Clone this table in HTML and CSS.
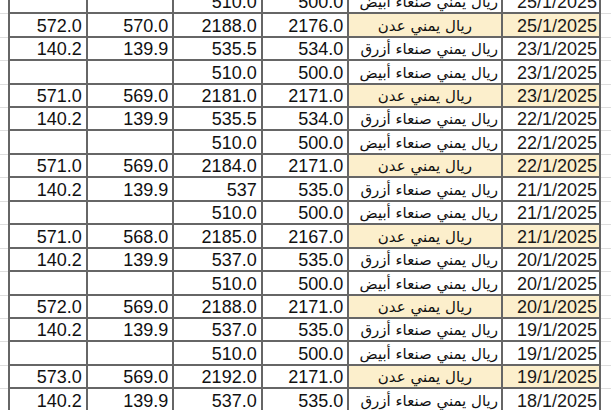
FILE: index.html
```html
<!DOCTYPE html>
<html lang="ar">
<head>
<meta charset="utf-8">
<title>أسعار الصرف</title>
<link rel="stylesheet" href="styles.css">
</head>
<body>
<div class="sheet">
  <div class="row"><div class="g gl"></div><div class="c c1"></div><div class="c c2"></div><div class="c c3">510.0</div><div class="c c4">500.0</div><div class="c nm">ريال يمني صنعاء أبيض</div><div class="c dt">25/1/2025</div><div class="g gr"></div></div>
  <div class="row"><div class="g gl"></div><div class="c c1">572.0</div><div class="c c2">570.0</div><div class="c c3">2188.0</div><div class="c c4">2176.0</div><div class="c nm hl aden">ريال يمني عدن</div><div class="c dt hl">25/1/2025</div><div class="g gr"></div></div>
  <div class="row"><div class="g gl"></div><div class="c c1">140.2</div><div class="c c2">139.9</div><div class="c c3">535.5</div><div class="c c4">534.0</div><div class="c nm">ريال يمني صنعاء أزرق</div><div class="c dt">23/1/2025</div><div class="g gr"></div></div>
  <div class="row"><div class="g gl"></div><div class="c c1"></div><div class="c c2"></div><div class="c c3">510.0</div><div class="c c4">500.0</div><div class="c nm">ريال يمني صنعاء أبيض</div><div class="c dt">23/1/2025</div><div class="g gr"></div></div>
  <div class="row"><div class="g gl"></div><div class="c c1">571.0</div><div class="c c2">569.0</div><div class="c c3">2181.0</div><div class="c c4">2171.0</div><div class="c nm hl aden">ريال يمني عدن</div><div class="c dt hl">23/1/2025</div><div class="g gr"></div></div>
  <div class="row"><div class="g gl"></div><div class="c c1">140.2</div><div class="c c2">139.9</div><div class="c c3">535.5</div><div class="c c4">534.0</div><div class="c nm">ريال يمني صنعاء أزرق</div><div class="c dt">22/1/2025</div><div class="g gr"></div></div>
  <div class="row"><div class="g gl"></div><div class="c c1"></div><div class="c c2"></div><div class="c c3">510.0</div><div class="c c4">500.0</div><div class="c nm">ريال يمني صنعاء أبيض</div><div class="c dt">22/1/2025</div><div class="g gr"></div></div>
  <div class="row"><div class="g gl"></div><div class="c c1">571.0</div><div class="c c2">569.0</div><div class="c c3">2184.0</div><div class="c c4">2171.0</div><div class="c nm hl aden">ريال يمني عدن</div><div class="c dt hl">22/1/2025</div><div class="g gr"></div></div>
  <div class="row"><div class="g gl"></div><div class="c c1">140.2</div><div class="c c2">139.9</div><div class="c c3">537</div><div class="c c4">535.0</div><div class="c nm">ريال يمني صنعاء أزرق</div><div class="c dt">21/1/2025</div><div class="g gr"></div></div>
  <div class="row"><div class="g gl"></div><div class="c c1"></div><div class="c c2"></div><div class="c c3">510.0</div><div class="c c4">500.0</div><div class="c nm">ريال يمني صنعاء أبيض</div><div class="c dt">21/1/2025</div><div class="g gr"></div></div>
  <div class="row"><div class="g gl"></div><div class="c c1">571.0</div><div class="c c2">568.0</div><div class="c c3">2185.0</div><div class="c c4">2167.0</div><div class="c nm hl aden">ريال يمني عدن</div><div class="c dt hl">21/1/2025</div><div class="g gr"></div></div>
  <div class="row"><div class="g gl"></div><div class="c c1">140.2</div><div class="c c2">139.9</div><div class="c c3">537.0</div><div class="c c4">535.0</div><div class="c nm">ريال يمني صنعاء أزرق</div><div class="c dt">20/1/2025</div><div class="g gr"></div></div>
  <div class="row"><div class="g gl"></div><div class="c c1"></div><div class="c c2"></div><div class="c c3">510.0</div><div class="c c4">500.0</div><div class="c nm">ريال يمني صنعاء أبيض</div><div class="c dt">20/1/2025</div><div class="g gr"></div></div>
  <div class="row"><div class="g gl"></div><div class="c c1">572.0</div><div class="c c2">569.0</div><div class="c c3">2188.0</div><div class="c c4">2171.0</div><div class="c nm hl aden">ريال يمني عدن</div><div class="c dt hl">20/1/2025</div><div class="g gr"></div></div>
  <div class="row"><div class="g gl"></div><div class="c c1">140.2</div><div class="c c2">139.9</div><div class="c c3">537.0</div><div class="c c4">535.0</div><div class="c nm">ريال يمني صنعاء أزرق</div><div class="c dt">19/1/2025</div><div class="g gr"></div></div>
  <div class="row"><div class="g gl"></div><div class="c c1"></div><div class="c c2"></div><div class="c c3">510.0</div><div class="c c4">500.0</div><div class="c nm">ريال يمني صنعاء أبيض</div><div class="c dt">19/1/2025</div><div class="g gr"></div></div>
  <div class="row"><div class="g gl"></div><div class="c c1">573.0</div><div class="c c2">569.0</div><div class="c c3">2192.0</div><div class="c c4">2171.0</div><div class="c nm hl aden">ريال يمني عدن</div><div class="c dt hl">19/1/2025</div><div class="g gr"></div></div>
  <div class="row"><div class="g gl"></div><div class="c c1">140.2</div><div class="c c2">139.9</div><div class="c c3">537.0</div><div class="c c4">535.0</div><div class="c nm">ريال يمني صنعاء أزرق</div><div class="c dt">18/1/2025</div><div class="g gr"></div></div>
</div>
</body>
</html>
```
FILE: styles.css
```css
html, body {
  margin: 0;
  padding: 0;
  background: #ffffff;
  overflow: hidden;
}
.sheet {
  margin-top: -9.2px;
  direction: ltr;
}
.row {
  display: flex;
  height: 23.45px;
}
.g {
  box-sizing: border-box;
  height: 100%;
  border-bottom: 1px solid #dedede;
}
.gl { width: 7.7px; flex: none; }
.gr { flex: 1; }
.c {
  box-sizing: border-box;
  flex: none;
  height: 100%;
  border-right: 2px solid #666666;
  border-bottom: 2px solid #666666;
  display: flex;
  align-items: flex-end;
  justify-content: flex-end;
  padding: 0 4px 1px 0;
  font-family: "Liberation Sans", Arial, "DejaVu Sans", sans-serif;
  font-size: 18px;
  line-height: 18px;
  color: #111111;
  white-space: nowrap;
}
.c1 { width: 80px; border-left: 2px solid #666666; }
.c2 { width: 86.6px; }
.c3 { width: 88.4px; }
.c4 { width: 86.6px; }
.nm {
  width: 153.7px;
  direction: rtl;
  justify-content: flex-start;
  padding-right: 3px;
  font-family: "DejaVu Sans", sans-serif;
  font-size: 15px;
}
.aden { padding-right: 29px; }
.dt { width: 98px; padding-right: 2px; color: #1a1a1a; }
.hl { background: #fcefcc; }
```
